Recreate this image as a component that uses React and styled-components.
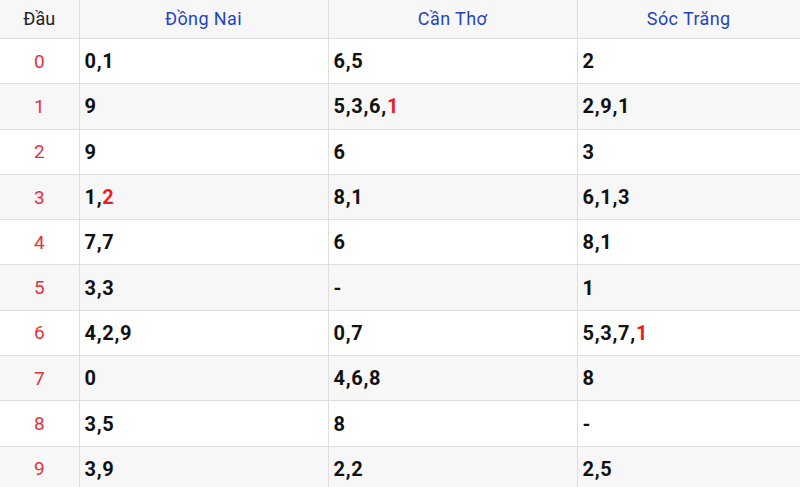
import styled, {createGlobalStyle} from 'styled-components';

const Global = createGlobalStyle`
  html, body {
    margin: 0;
    padding: 0;
    background: #fff;
    font-family: Roboto, "Liberation Sans", Arial, sans-serif;
  }
`;

const Table = styled.table`
  width: 800px;
  border-collapse: collapse;
  table-layout: fixed;
`;

const Col = styled.col`
  width: ${props => props.$w};
`;

const HeadCell = styled.th`
  height: 38px;
  padding: 0;
  font-weight: 400;
  font-size: 18px;
  line-height: 18px;
  letter-spacing: 0.4px;
  text-align: center;
  vertical-align: middle;
  color: ${props => props.$first ? '#222' : '#2544c2'};
  background: #f7f7f7;
  border: 1px solid #dedede;
  border-top: none;
  &:first-child { border-left: none; letter-spacing: 0; }
  &:last-child { border-right: none; }
`;

const Row = styled.tr`
  background: ${props => props.$odd ? '#f7f7f7' : '#fff'};
`;

const HeadNum = styled.td`
  height: 44.3px;
  padding: 0;
  text-align: center;
  font-size: 19px;
  color: #e8303a;
  border: 1px solid #dedede;
  border-left: none;
`;

const Cell = styled.td`
  height: 44.3px;
  padding: 0 0 0 5px;
  font-size: 20px;
  letter-spacing: 0.7px;
  font-weight: 700;
  color: #111;
  border: 1px solid #dedede;
  &:last-child { border-right: none; }
`;

const Hit = styled.span`
  color: #ee1c25;
`;

const rows = [
  ['0,1', '6,5', '2'],
  ['9', '5,3,6,*1', '2,9,1'],
  ['9', '6', '3'],
  ['1,*2', '8,1', '6,1,3'],
  ['7,7', '6', '8,1'],
  ['3,3', '-', '1'],
  ['4,2,9', '0,7', '5,3,7,*1'],
  ['0', '4,6,8', '8'],
  ['3,5', '8', '-'],
  ['3,9', '2,2', '2,5'],
];

function Value({text}) {
  const i = text.indexOf('*');
  if (i < 0) return text;
  return <>{text.slice(0, i)}<Hit>{text.slice(i + 1)}</Hit></>;
}

export default function App() {
  return (
    <>
      <Global />
      <Table>
        <colgroup>
          <Col $w="79px" />
          <Col $w="249px" />
          <Col $w="249px" />
          <Col $w="223px" />
        </colgroup>
        <thead>
          <tr>
            <HeadCell $first>Đầu</HeadCell>
            <HeadCell>Đồng Nai</HeadCell>
            <HeadCell>Cần Thơ</HeadCell>
            <HeadCell>Sóc Trăng</HeadCell>
          </tr>
        </thead>
        <tbody>
          {rows.map((r, i) => (
            <Row key={i} $odd={i % 2 === 1}>
              <HeadNum>{i}</HeadNum>
              {r.map((v, j) => <Cell key={j}><Value text={v} /></Cell>)}
            </Row>
          ))}
        </tbody>
      </Table>
    </>
  );
}
